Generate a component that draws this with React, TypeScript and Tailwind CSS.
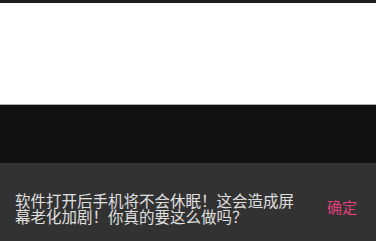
import React from 'react';

export default function App() {
  return (
    <div className="w-[376px] h-[241px] flex flex-col overflow-hidden bg-[#111111]" style={{ fontFamily: '"Noto Sans CJK SC", sans-serif' }}>
      {/* status strip */}
      <div className="h-[3px] bg-[#1e1e1e]" />
      {/* content */}
      <div className="h-[102px] bg-white border-b border-[#b0b0b0]" />
      <div className="h-[58px] bg-[#111111]" />

      {/* snackbar */}
      <div className="flex-1 bg-[#323232] flex items-start pt-[29px] pl-[15px] pr-[19px]">
        <p className="w-[290px] text-[15.5px] leading-[16px] text-[#e0e0e0]">
          软件打开后手机将不会休眠！这会造成屏幕老化加剧！你真的要这么做吗？
        </p>
        <button className="ml-auto mt-[7px] text-[15px] leading-[16px] text-[#e0407b]">确定</button>
      </div>
    </div>
  );
}
